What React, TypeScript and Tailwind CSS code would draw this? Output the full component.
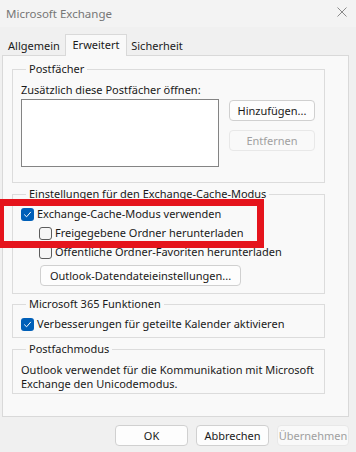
import React from 'react';

function Check({ checked }: { checked?: boolean }) {
  if (checked) {
    return (
      <span className="w-[13px] h-[13px] rounded-[3px] bg-[#005fb8] flex items-center justify-center shrink-0">
        <svg width="9" height="9" viewBox="0 0 9 9" fill="none">
          <path d="M1.5 4.8 L3.6 6.8 L7.6 2.2" stroke="#ffffff" strokeWidth="1" strokeLinecap="round" strokeLinejoin="round" />
        </svg>
      </span>
    );
  }
  return <span className="w-[13px] h-[13px] rounded-[3px] border border-[#5c5c5c] bg-[#f6f6f6] shrink-0" />;
}

function Btn({ children, w, disabled }: { children: React.ReactNode; w: string; disabled?: boolean }) {
  return (
    <button
      type="button"
      className={`${w} h-[21px] rounded-[4px] border text-[11px] leading-none whitespace-nowrap flex items-center justify-center ${
        disabled ? 'border-[#e8e8e8] bg-[#f9f9f9] text-[#a0a0a0]' : 'border-[#d0d0d0] bg-[#fdfdfd] text-[#1a1a1a]'
      }`}
    >
      {children}
    </button>
  );
}

function Group({ title, className, children }: { title: string; className?: string; children: React.ReactNode }) {
  return (
    <fieldset className={`w-[313px] border border-[#dcdcdc] ${className ?? ''}`}>
      <legend className="ml-[5px] px-[3px] leading-[16px] text-[#1a1a1a]">{title}</legend>
      {children}
    </fieldset>
  );
}

export default function App() {
  return (
    <div className="relative w-[356px] h-[452px] overflow-hidden bg-[#f0f0f0] text-[#1a1a1a] font-['Noto_Sans',sans-serif] text-[11px] flex flex-col select-none whitespace-nowrap">
      {/* Title bar */}
      <div className="h-[27px] bg-[#f3f3f3] flex items-center justify-between pl-[6px] pr-[9px] shrink-0">
        <span className="text-[11.5px] text-[#767676]">Microsoft Exchange</span>
        <svg width="10" height="10" viewBox="0 0 10 10" className="-mt-[3px]">
          <path d="M0.5 0.5 L9.5 9.5 M9.5 0.5 L0.5 9.5" stroke="#8a8a8a" strokeWidth="1" />
        </svg>
      </div>

      {/* Tabs */}
      <div className="mt-[7px] h-[22px] flex items-end pl-[3px] relative z-10 shrink-0">
        <div className="w-[62px] h-[19px] mb-px flex items-center justify-center pt-[1px]">Allgemein</div>
        <div className="w-[62px] h-[22px] bg-[#f9f9f9] border-x border-t border-[#d9d9d9] flex items-start justify-center pt-[2px]">Erweitert</div>
        <div className="w-[57px] h-[19px] mb-px flex items-center justify-center pt-[1px] pl-[3px]">Sicherheit</div>
      </div>

      {/* Tab page */}
      <div className="-mt-px ml-[2px] w-[347px] h-[362px] border border-[#d9d9d9] bg-[#f9f9f9] pl-[9px] pt-[5px] shrink-0">
        <Group title="Postfächer" className="px-[8px] pb-[15px]">
          <div className="mt-[5px] leading-[16px]">Zusätzlich diese Postfächer öffnen:</div>
          <div className="mt-[1px] flex">
            <div className="w-[198px] h-[68px] border border-[#848484] bg-white" />
            <div className="ml-[10px] mt-[1px] flex flex-col gap-[9px]">
              <Btn w="w-[86px]">Hinzufügen...</Btn>
              <Btn w="w-[86px]" disabled>Entfernen</Btn>
            </div>
          </div>
        </Group>

        <Group title="Einstellungen für den Exchange-Cache-Modus" className="mt-[3px] px-[8px] pb-[7px]">
          <div className="mt-[4px] flex flex-col gap-[3px]">
            <label className="h-[16px] flex items-center gap-[3px]">
              <Check checked />
              <span>Exchange-Cache-Modus verwenden</span>
            </label>
            <label className="h-[16px] flex items-center gap-[3px] pl-[18px]">
              <Check />
              <span>Freigegebene Ordner herunterladen</span>
            </label>
            <label className="h-[16px] flex items-center gap-[3px] pl-[18px]">
              <Check />
              <span>Öffentliche Ordner-Favoriten herunterladen</span>
            </label>
          </div>
          <div className="mt-[5px] pl-[19px]">
            <Btn w="w-[201px]">Outlook-Datendateieinstellungen...</Btn>
          </div>
        </Group>

        <Group title="Microsoft 365 Funktionen" className="mt-[2px] px-[8px] pb-[5px]">
          <label className="mt-[4px] h-[16px] flex items-center gap-[3px]">
            <Check checked />
            <span>Verbesserungen für geteilte Kalender aktivieren</span>
          </label>
        </Group>

        <Group title="Postfachmodus" className="mt-[3px] px-[8px] pb-[2px]">
          <p className="mt-[6px] leading-[14px]">
            Outlook verwendet für die Kommunikation mit Microsoft
            <br />
            Exchange den Unicodemodus.
          </p>
        </Group>
      </div>

      {/* Dialog buttons */}
      <div className="mt-[8px] flex justify-end gap-[8px] pr-[7px]">
        <Btn w="w-[73px]">OK</Btn>
        <Btn w="w-[73px]">Abbrechen</Btn>
        <Btn w="w-[72px]" disabled>Übernehmen</Btn>
      </div>

      {/* Red highlight annotation */}
      <div className="absolute left-[-3px] top-[199px] w-[267px] h-[49px] border-[7px] border-[#e5141c] pointer-events-none" />
    </div>
  );
}
